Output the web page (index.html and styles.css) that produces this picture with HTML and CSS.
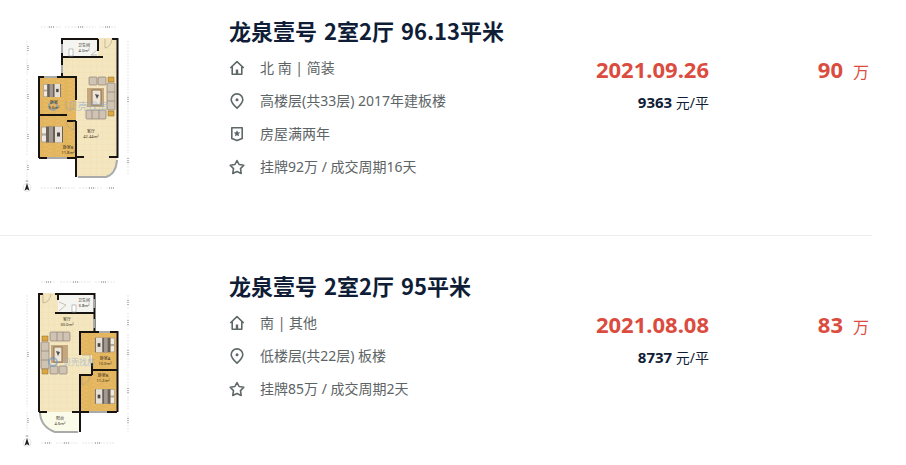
FILE: index.html
```html
<!DOCTYPE html>
<html lang="zh-CN">
<head>
  <meta charset="utf-8">
  <title>龙泉壹号 成交记录</title>
  <link rel="stylesheet" href="styles.css">
</head>
<body>
  <!-- shared icons -->
  <svg class="sprite" aria-hidden="true">
    <defs>
      <symbol id="i-home" viewBox="0 0 16 16">
        <path d="M1.3 8 8 1.7 14.7 8M3.2 6.6v7.7h2.6M12.8 6.6v7.7h-2.6M5.8 14.3h4.4" />
        <path class="solid" d="M6.8 9.5h2.4v4.8H6.8z" />
      </symbol>
      <symbol id="i-pin" viewBox="0 0 16 16">
        <path d="M8 15.2C5 12.4 2.2 9.8 2.2 6.7a5.8 5.8 0 0 1 11.6 0c0 3.1-2.8 5.7-5.8 8.5z" />
        <circle class="solid" cx="8" cy="6.7" r="1.5" />
      </symbol>
      <symbol id="i-badge" viewBox="0 0 16 16">
        <path d="M2.8 1.8h10.4v10.6L8 14.6l-5.2-2.2z" />
        <path class="solid" d="m8 4.300 1 2 2.200.3-1.600 1.500.4 2.200-2-1-2 1 .4-2.200-1.600-1.500 2.200-.3z" />
      </symbol>
      <symbol id="i-star" viewBox="0 0 16 16">
        <path d="m8 1.5 2.1 4 4.7.8-3.3 3.3.7 4.8L8 12.6l-4.2 1.8.7-4.8L1.2 6.3l4.7-.8z" />
      </symbol>
      <symbol id="i-compass" viewBox="0 0 10 14">
        <circle cx="5" cy="8.500" r="4" fill="#fff" stroke="#ccc" stroke-width=".5" />
        <path d="M5 4 7.400 11.500 5 10.300 2.600 11.500z" fill="#222" />
        <path d="M4.200 3V1.200L5.800 3V1.200" fill="none" stroke="#888" stroke-width=".5" />
      </symbol>
      <symbol id="i-bed" viewBox="0 0 23 16">
        <rect x="0" y="0" width="5" height="16" fill="#b3a79b" />
        <rect x="1" y="1" width="4" height="6" rx="1" fill="#eee9e2" />
        <rect x="1" y="9" width="4" height="6" rx="1" fill="#eee9e2" />
        <rect x="5" y="0" width="17" height="16" fill="#6b6058" />
        <rect x="8" y="0" width="4" height="16" fill="#a29b93" />
        <rect x="14" y="0" width="7" height="16" fill="#e6dfd5" />
        <rect x="16" y="6" width="3" height="4" fill="#4c4541" />
      </symbol>
      <pattern id="tile" width="6" height="6" patternUnits="userSpaceOnUse">
        <rect width="6" height="6" fill="#f4e6bf" />
        <path d="M0 0h6M0 0v6" stroke="#eadaab" stroke-width=".5" />
      </pattern>
      <pattern id="wood" width="12" height="4" patternUnits="userSpaceOnUse">
        <rect width="12" height="4" fill="#e6b964" />
        <path d="M0 1h8M4 3h8" stroke="#dba950" stroke-width=".6" />
      </pattern>
    </defs>
  </svg>

  <ul class="deal-list">
    <li class="deal">
      <svg class="plan" viewBox="15 17 125 180" role="img" aria-label="户型图">
        <!-- floors -->
        <path d="M62 38h55v120l-1 8-4 6-6 5H76V77H62z" fill="url(#tile)" />
        <path d="M39 77h37v81H39z" fill="url(#wood)" />
        <path d="M62 39h36v18H62z" fill="#f4f4f1" />
        <!-- walls -->
        <path class="wall" d="M98 39H62v38M62 57h41M98 39v12M112 39h5.500v26V158M109 157h9M39 77v81M38 77h38v23M38 115h29M76 121v56M67 121h9M76 157h8M39 158h37" />
        <path class="window" d="M44 77h13M47 158h20M62 44v9M62 65v8M78 177h28q10-3 11-17" />
        <path class="door" d="M105 39v9q6-1 7-9M97 50l-6 5h6M66 101v8h8M74 121v9q-6-1-8-8" />
        <rect x="69" y="49" width="4" height="7" fill="#fff" stroke="#999" stroke-width=".6" />
        <!-- furniture -->
        <use href="#i-bed" x="41" y="84" width="23" height="13" preserveAspectRatio="none" />
        <use href="#i-bed" x="41" y="125" width="23" height="19" preserveAspectRatio="none" />
        <g class="sofa">
          <rect x="89" y="77" width="8" height="8" rx="1" />
          <rect x="98" y="77" width="8" height="8" rx="1" />
          <rect x="107" y="83" width="8" height="27" rx="1" />
          <rect x="86" y="110" width="20" height="9" rx="1" />
          <path d="M107 92h8M107 101h8M92 110v9M99 110v9" />
        </g>
        <rect x="87" y="88" width="17" height="19" fill="#c5a77f" />
        <rect x="92" y="90" width="9" height="15" fill="#eee5d5" stroke="#8a7051" />
        <path d="m95 94 4 1-2 4z" fill="#4f5255" />
        <path d="M108 77h6v5h-6zM108 111h6v5h-6z" fill="#dda843" stroke="#8a6a35" stroke-width=".5" />
        <g class="watermark"><circle cx="53" cy="106" r="4" /><text x="88" y="110">贝壳找房</text></g>
        <g class="room">
          <text x="84" y="47">卫生间</text><text x="84" y="52">4.0m²</text>
          <text x="91" y="133">客厅</text><text x="91" y="138">42.44m²</text>
          <text x="54" y="104">卧室</text><text x="54" y="109">9.6m²</text>
          <text x="68" y="149">卧室B</text><text x="68" y="154">11.8m²</text>
        </g>
        <path class="measure" d="M41 27h20M65 27h31M99 27h17M27 41v15M27 59v16M27 79v35M27 117v39M27 160v19M128 41v112M128 157v18M41 188h34M79 188h24M106 188h9" />
        <path class="ticks" d="M49 27h6M78 27h6M105 27h6M28 46v5M28 65v5M28 94v5M28 134v5M28 165v5M128 97v5M128 158v5M56 188h6M89 188h6M109 188h5" />
        <use href="#i-compass" x="22" y="179" width="10" height="14" />
      </svg>
      <div class="info">
        <h2 class="title"><a href="#"><span>龙泉壹号</span> <span>2室2厅</span> <span>96.13平米</span></a></h2>
        <ul class="facts">
          <li><svg class="icon"><use href="#i-home" /></svg>北 南 | 简装</li>
          <li><svg class="icon"><use href="#i-pin" /></svg>高楼层(共33层) 2017年建板楼</li>
          <li><svg class="icon"><use href="#i-badge" /></svg>房屋满两年</li>
          <li><svg class="icon"><use href="#i-star" /></svg>挂牌92万 / 成交周期16天</li>
        </ul>
      </div>
      <div class="closing">
        <div class="date">2021.09.26</div>
        <div class="unit"><b>9363</b> 元/平</div>
      </div>
      <div class="price"><b>90</b><span>万</span></div>
    </li>

    <li class="deal">
      <svg class="plan" viewBox="15 272 125 180" role="img" aria-label="户型图">
        <!-- floors -->
        <path d="M39 293h55v39l-14 80H39z" fill="url(#tile)" />
        <path d="M80 332h37v80H80z" fill="url(#wood)" />
        <path d="M80 355h12v21H80z" fill="url(#tile)" />
        <path d="M58 294h36v18H58z" fill="#f4f4f1" />
        <path d="M39 412h40v20H55q-14-4-16-20z" fill="#fbfbea" />
        <!-- walls -->
        <path class="wall" d="M38 294h5M55 294h39.500v38M58 294v6M55 313h40M39 293v119M80 355v-23h37.500v80M92 363v12M92 370h25M79 375h13M80 375v57M80 412h37M39 412h8M72 412h8" />
        <path class="window" d="M94 299v9M94 319v9M99 332h11M89 412h18M78 432H55q-14-5-15-19" />
        <path class="door" d="M43 294v9q7-1 8-9M59 302l7 3-7 6M82 376v9q7-2 8-9M82 355h8v8" />
        <rect x="72" y="305" width="4" height="7" fill="#fff" stroke="#999" stroke-width=".6" />
        <!-- furniture -->
        <use href="#i-bed" x="-115" y="336" width="21" height="18" preserveAspectRatio="none" transform="scale(-1 1)" />
        <use href="#i-bed" x="-115" y="387" width="21" height="19" preserveAspectRatio="none" transform="scale(-1 1)" />
        <g class="sofa">
          <rect x="50" y="332" width="20" height="9" rx="1" />
          <rect x="41" y="342" width="8" height="27" rx="1" />
          <rect x="50" y="366" width="8" height="8" rx="1" />
          <rect x="59" y="366" width="8" height="8" rx="1" />
          <path d="M57 332v9M63 332v9M41 351h8M41 360h8" />
        </g>
        <rect x="51" y="345" width="17" height="18" fill="#c5a77f" />
        <rect x="54" y="347" width="8" height="15" fill="#eee5d5" stroke="#8a7051" />
        <path d="m56 351 4 1-2 4z" fill="#4f5255" />
        <path d="M42 336h6v5h-6zM42 369h6v5h-6z" fill="#dda843" stroke="#8a6a35" stroke-width=".5" />
        <g class="watermark"><circle cx="53" cy="362" r="4" /><text class="narrow" x="79" y="365">贝壳找房</text></g>
        <g class="room">
          <text x="84" y="302">卫生间</text><text x="84" y="307">3.8m²</text>
          <text x="67" y="321">客厅</text><text x="67" y="326">30.0m²</text>
          <text x="105" y="360">卧室A</text><text x="105" y="365">10.0m²</text>
          <text x="103" y="377">卧室B</text><text x="103" y="382">11.2m²</text>
          <text x="60" y="420">阳台</text><text x="60" y="425">4.6m²</text>
        </g>
        <path class="measure" d="M41 282h15M60 282h31M95 282h20M27 295v112M27 412v19M128 295v15M128 313v16M128 334v34M128 372v37M128 413v19M41 443h12M56 443h22M82 443h33" />
        <path class="ticks" d="M46 282h6M73 282h6M101 282h6M28 352v5M28 418v5M128 300v5M128 320v5M128 350v5M128 388v5M128 418v5M45 443h6M64 443h6M95 443h6" />
        <use href="#i-compass" x="22" y="434" width="10" height="14" />
      </svg>
      <div class="info">
        <h2 class="title"><a href="#"><span>龙泉壹号</span> <span>2室2厅</span> <span>95平米</span></a></h2>
        <ul class="facts">
          <li><svg class="icon"><use href="#i-home" /></svg>南 | 其他</li>
          <li><svg class="icon"><use href="#i-pin" /></svg>低楼层(共22层) 板楼</li>
          <li><svg class="icon"><use href="#i-star" /></svg>挂牌85万 / 成交周期2天</li>
        </ul>
      </div>
      <div class="closing">
        <div class="date">2021.08.08</div>
        <div class="unit"><b>8737</b> 元/平</div>
      </div>
      <div class="price"><b>83</b><span>万</span></div>
    </li>
  </ul>
</body>
</html>
```

FILE: styles.css
```css
html, body {
  margin: 0; padding: 0;
  background: #fff;
}
body {
  font-family: "Noto Sans", "Noto Sans CJK SC", sans-serif;
  font-size: 14px;
  color: #5d6466;
}
ul {
  list-style: none;
  margin: 0; padding: 0;
}
.sprite {
  display: block;
  width: 0; height: 0;
}
.deal-list {
  margin-right: 34px;
}
.deal {
  display: flex;
  align-items: flex-start;
  padding: 36px 3px 38px 15px;
}
.deal:first-child { padding-top: 17px; }
.deal:last-child { padding-bottom: 0; }
.deal + .deal { border-top: 1px solid #eee; }

/* floor plan thumbnail */
.plan {
  flex: none;
  width: 125px; height: 180px;
  margin-right: 89px;
}
.wall { fill: none; stroke: #161310; stroke-width: 2; }
.window { fill: none; stroke: #a9abab; stroke-width: 2; }
.door { fill: none; stroke: #aaa08c; stroke-width: .6; }
.sofa { fill: #cfc3b4; stroke: #8d8074; stroke-width: .7; }
.measure { fill: none; stroke: #ccc; stroke-width: .5; stroke-dasharray: 2 1; }
.ticks { fill: none; stroke: #bbb; stroke-width: 2; stroke-dasharray: 1 1; }
.room {
  font-size: 4px;
  text-anchor: middle;
  fill: #332c20;
}
.watermark {
  font-size: 10px;
  text-anchor: middle;
  fill: #8fadd0;
  opacity: .6;
}
.watermark .narrow { font-size: 8px; }
.watermark circle { fill: none; stroke: #6a98cf; stroke-width: 2; }

.info {
  flex: 1;
  min-width: 0;
}
.title {
  margin: 0 0 8px;
  font-family: "Noto Sans CJK SC", sans-serif;
  font-size: 22px;
  line-height: 26px;
  font-weight: 700;
}
.title a {
  display: flex;
  gap: 7px;
  color: #101d37;
  text-decoration: none;
}
.facts li {
  display: flex;
  align-items: center;
  gap: 15px;
  line-height: 33px;
}
.icon {
  flex: none;
  width: 16px; height: 16px;
  fill: none;
  stroke: #5f6769;
  stroke-width: 1.6;
}
.icon use { stroke-linejoin: round; }
.solid { fill: #5f6769; stroke: none; }

.closing {
  margin-top: 36px;
  text-align: right;
  line-height: 33px;
}
.date {
  color: #db4c3f;
  font-size: 22px;
  font-weight: 700;
}
.unit { color: #101d37; }
.unit b { font-size: 15px; }
.price {
  display: flex;
  justify-content: flex-end;
  align-items: baseline;
  gap: 10px;
  width: 160px;
  margin-top: 36px;
  line-height: 33px;
  color: #db4c3f;
}
.price b { font-size: 22px; }
.price span { font-size: 16px; }
```
